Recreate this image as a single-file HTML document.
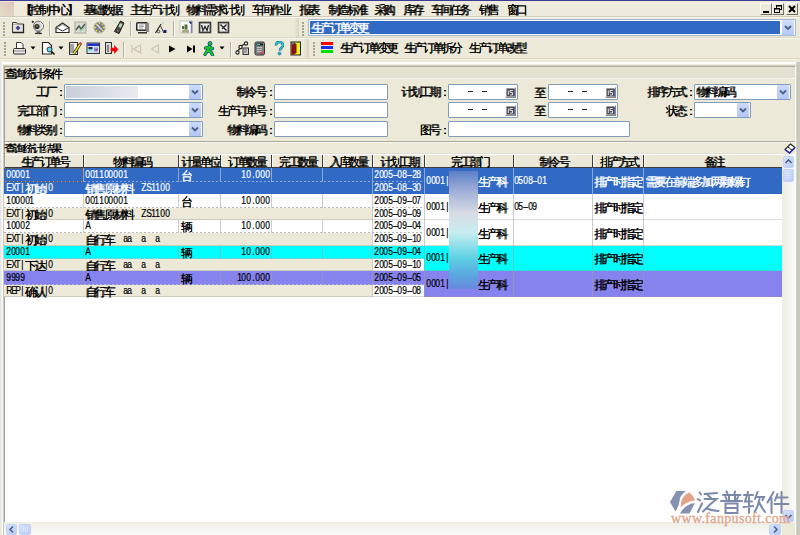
<!DOCTYPE html>
<html><head><meta charset="utf-8"><style>
html,body{margin:0;padding:0;}
body{width:800px;height:535px;overflow:hidden;position:relative;background:#ECE9D8;font-family:"Liberation Sans",sans-serif;}
body>div{position:absolute;}
.t{white-space:nowrap;height:14px;line-height:14px;}
.t span{display:inline-block;height:14px;overflow:visible;vertical-align:top;}
.t b.c{display:inline-block;width:9.4px;height:14px;vertical-align:top;text-align:center;font-weight:normal;font-size:12px;position:relative;top:0px;text-shadow:.5px 0 0 currentColor;}
.t i.g{display:inline-block;width:4.7px;height:14px;vertical-align:top;text-align:center;font-style:normal;font-size:10px;position:relative;top:-1px;transform:scaleX(.85);-webkit-text-stroke:.2px currentColor;}
</style></head><body>
<div style="left:0px;top:0px;width:800px;height:1px;background:#3A3C98"></div>
<div style="left:0px;top:1px;width:800px;height:16px;background:#EEEBDC"></div>
<div style="left:0px;top:16px;width:800px;height:1px;background:#CFCBB8"></div>
<div style="left:0px;top:2px;width:14px;height:14px;background:linear-gradient(45deg,#E6DCC8,#DCC6BA)"></div>
<div class="t " style="left:20.0px;top:2.5px;color:#000"><b class="c">【</b><b class="c">控</b><b class="c">制</b><b class="c">中</b><b class="c">心</b><b class="c">】</b></div>
<div class="t " style="left:83.0px;top:2.5px;color:#000"><b class="c">基</b><b class="c">础</b><b class="c">数</b><b class="c">据</b></div>
<div class="t " style="left:130.0px;top:2.5px;color:#000"><b class="c">主</b><b class="c">生</b><b class="c">产</b><b class="c">计</b><b class="c">划</b></div>
<div class="t " style="left:186.0px;top:2.5px;color:#000"><b class="c">物</b><b class="c">料</b><b class="c">需</b><b class="c">求</b><b class="c">计</b><b class="c">划</b></div>
<div class="t " style="left:251.5px;top:2.5px;color:#000"><b class="c">车</b><b class="c">间</b><b class="c">作</b><b class="c">业</b></div>
<div class="t " style="left:299.0px;top:2.5px;color:#000"><b class="c">报</b><b class="c">表</b></div>
<div class="t " style="left:328.0px;top:2.5px;color:#000"><b class="c">制</b><b class="c">造</b><b class="c">标</b><b class="c">准</b></div>
<div class="t " style="left:374.0px;top:2.5px;color:#000"><b class="c">采</b><b class="c">购</b></div>
<div class="t " style="left:403.0px;top:2.5px;color:#000"><b class="c">库</b><b class="c">存</b></div>
<div class="t " style="left:431.0px;top:2.5px;color:#000"><b class="c">车</b><b class="c">间</b><b class="c">任</b><b class="c">务</b></div>
<div class="t " style="left:478.5px;top:2.5px;color:#000"><b class="c">销</b><b class="c">售</b></div>
<div class="t " style="left:506.5px;top:2.5px;color:#000"><b class="c">窗</b><b class="c">口</b></div>
<div style="left:760px;top:3px;width:12px;height:12px;background:#ECE9D8;border-top:1px solid #fff;border-left:1px solid #fff;border-right:1px solid #716F64;border-bottom:1px solid #716F64;box-sizing:border-box"></div>
<svg style="position:absolute;left:760px;top:3px" width="12" height="12" viewBox="0 0 12 12"><rect x="3" y="8" width="6" height="2" fill="#000"/></svg>
<div style="left:772px;top:3px;width:12px;height:12px;background:#ECE9D8;border-top:1px solid #fff;border-left:1px solid #fff;border-right:1px solid #716F64;border-bottom:1px solid #716F64;box-sizing:border-box"></div>
<svg style="position:absolute;left:772px;top:3px" width="12" height="12" viewBox="0 0 12 12"><rect x="4.5" y="2.5" width="5" height="4" fill="none" stroke="#000"/><rect x="4" y="2" width="6" height="1.5" fill="#000"/><rect x="2.5" y="5.5" width="5" height="4" fill="#ECE9D8" stroke="#000"/><rect x="2" y="5" width="6" height="1.5" fill="#000"/></svg>
<div style="left:786px;top:3px;width:12px;height:12px;background:#ECE9D8;border-top:1px solid #fff;border-left:1px solid #fff;border-right:1px solid #716F64;border-bottom:1px solid #716F64;box-sizing:border-box"></div>
<svg style="position:absolute;left:786px;top:3px" width="12" height="12" viewBox="0 0 12 12"><path d="M3 3L9 9M9 3L3 9" stroke="#000" stroke-width="2"/></svg>
<div style="left:0px;top:17px;width:800px;height:42px;background:#ECE9D8"></div>
<div style="left:0px;top:17px;width:800px;height:1px;background:#F8F7F0"></div>
<div style="left:0px;top:37px;width:800px;height:1px;background:#D9D5C3"></div>
<div style="left:0px;top:38px;width:800px;height:1px;background:#F8F7F0"></div>
<div style="left:0px;top:58px;width:800px;height:1px;background:#D9D5C3"></div>
<div style="left:294px;top:18px;width:5px;height:19px;background:linear-gradient(90deg,#ECE9D8,#D8D4C2)"></div>
<div style="left:304px;top:39px;width:5px;height:19px;background:linear-gradient(90deg,#ECE9D8,#D8D4C2)"></div>
<div style="left:3px;top:22px;width:2px;height:2px;background:#A8A495"></div>
<div style="left:3px;top:25px;width:2px;height:2px;background:#A8A495"></div>
<div style="left:3px;top:28px;width:2px;height:2px;background:#A8A495"></div>
<div style="left:3px;top:31px;width:2px;height:2px;background:#A8A495"></div>
<div style="left:3px;top:34px;width:2px;height:2px;background:#A8A495"></div>
<div style="left:302px;top:22px;width:2px;height:2px;background:#A8A495"></div>
<div style="left:302px;top:25px;width:2px;height:2px;background:#A8A495"></div>
<div style="left:302px;top:28px;width:2px;height:2px;background:#A8A495"></div>
<div style="left:302px;top:31px;width:2px;height:2px;background:#A8A495"></div>
<div style="left:302px;top:34px;width:2px;height:2px;background:#A8A495"></div>
<div style="left:4px;top:42px;width:2px;height:2px;background:#A8A495"></div>
<div style="left:4px;top:45px;width:2px;height:2px;background:#A8A495"></div>
<div style="left:4px;top:48px;width:2px;height:2px;background:#A8A495"></div>
<div style="left:4px;top:51px;width:2px;height:2px;background:#A8A495"></div>
<div style="left:4px;top:54px;width:2px;height:2px;background:#A8A495"></div>
<div style="left:313px;top:42px;width:2px;height:2px;background:#A8A495"></div>
<div style="left:313px;top:45px;width:2px;height:2px;background:#A8A495"></div>
<div style="left:313px;top:48px;width:2px;height:2px;background:#A8A495"></div>
<div style="left:313px;top:51px;width:2px;height:2px;background:#A8A495"></div>
<div style="left:313px;top:54px;width:2px;height:2px;background:#A8A495"></div>
<div style="left:49px;top:21px;width:1px;height:15px;background:#B4B0A0"></div>
<div style="left:50px;top:21px;width:1px;height:15px;background:#F8F8F4"></div>
<div style="left:130px;top:21px;width:1px;height:15px;background:#B4B0A0"></div>
<div style="left:131px;top:21px;width:1px;height:15px;background:#F8F8F4"></div>
<div style="left:173px;top:21px;width:1px;height:15px;background:#B4B0A0"></div>
<div style="left:174px;top:21px;width:1px;height:15px;background:#F8F8F4"></div>
<div style="left:123px;top:42px;width:1px;height:15px;background:#B4B0A0"></div>
<div style="left:124px;top:42px;width:1px;height:15px;background:#F8F8F4"></div>
<div style="left:230px;top:42px;width:1px;height:15px;background:#B4B0A0"></div>
<div style="left:231px;top:42px;width:1px;height:15px;background:#F8F8F4"></div>
<div style="left:308px;top:19px;width:488px;height:17px;background:#fff;border:1px solid #A5B8D8;box-sizing:border-box"></div>
<div style="left:310px;top:21px;width:470px;height:13px;background:#316AC5"></div>
<div class="t " style="left:311.0px;top:20.5px;color:#fff"><b class="c">生</b><b class="c">产</b><b class="c">订</b><b class="c">单</b><b class="c">变</b><b class="c">更</b></div>
<div style="left:782px;top:20px;width:12px;height:15px;background:linear-gradient(180deg,#D2DEFC,#B4C8F6);border-radius:1px"></div>
<svg style="position:absolute;left:782px;top:20px" width="12" height="15" viewBox="0 0 12 15"><path d="M3 6L6 9L9 6" fill="none" stroke="#4D6185" stroke-width="1.8"/></svg>
<div style="left:321px;top:42px;width:12px;height:3px;background:#F00"></div>
<div style="left:321px;top:46px;width:12px;height:3px;background:#2030F0"></div>
<div style="left:321px;top:50px;width:12px;height:3px;background:#00E000"></div>
<div class="t " style="left:340.0px;top:41.0px;color:#000"><b class="c">生</b><b class="c">产</b><b class="c">订</b><b class="c">单</b><b class="c">变</b><b class="c">更</b></div>
<div class="t " style="left:404.0px;top:41.0px;color:#000"><b class="c">生</b><b class="c">产</b><b class="c">订</b><b class="c">单</b><b class="c">拆</b><b class="c">分</b></div>
<div class="t " style="left:468.5px;top:41.0px;color:#000"><b class="c">生</b><b class="c">产</b><b class="c">订</b><b class="c">单</b><b class="c">改</b><b class="c">型</b></div>
<svg style="position:absolute;left:11px;top:21px" width="14" height="14" viewBox="0 0 14 14"><path d="M1.5 1.5h4l1 1.5h6v8.5h-11z" fill="#E6E4DC" stroke="#3C3C3C"/><path d="M1.5 11.5h11V3" fill="none" stroke="#222" stroke-width="1.3"/><path d="M2 3.5h4" stroke="#B8B6A8"/><path d="M7 4.5L9.5 7L7 9.5L4.5 7z" fill="#3E4490"/></svg>
<svg style="position:absolute;left:31px;top:20px" width="14" height="15" viewBox="0 0 14 15"><circle cx="1.8" cy="1.8" r="1.1" fill="#222"/><circle cx="7.5" cy="6.2" r="5" fill="#D8D8D8" stroke="#666"/><path d="M9 2.5A4 4 0 0 1 11 8" stroke="#fff" fill="none"/><circle cx="6" cy="6.5" r="2.6" fill="#303030"/><path d="M5.2 6.8l.9-2 .9 2z" fill="#C8C020"/><path d="M5.5 11.2h4v1.8h-4z" fill="#666"/><path d="M4 13.5h7" stroke="#333" stroke-width="1.2"/></svg>
<svg style="position:absolute;left:55px;top:21.5px" width="15" height="12" viewBox="0 0 15 12"><path d="M1 5.5L7.5 1L14 5.5V10.5H1z" fill="#fff" stroke="#2A2A2A" stroke-width="1.2"/><path d="M1 5.5L7.5 9L14 5.5" fill="none" stroke="#2A2A2A"/><path d="M3 5l4.5-2.5L12 5" fill="none" stroke="#888"/></svg>
<svg style="position:absolute;left:74px;top:21px" width="13" height="13" viewBox="0 0 13 13"><rect x="1" y="1" width="11" height="11" fill="#D8DCD0" stroke="#A8AAA0"/><path d="M2 9L5 5L7 8L11 3" fill="none" stroke="#505A50" stroke-width="1.5"/><path d="M6 10L11 6" stroke="#88C8A0" stroke-width="1.5"/></svg>
<svg style="position:absolute;left:93px;top:21px" width="13" height="13" viewBox="0 0 13 13"><circle cx="6.5" cy="6.5" r="5.8" fill="#7A7E8C" stroke="#C8C8D0"/><path d="M6.5 1v2M6.5 10v2M1 6.5h2M10 6.5h2M2.8 2.8l1.3 1.3M9 9l1.3 1.3M10.2 2.8L9 4.1M2.8 10.2L4.1 9" stroke="#E8E030" stroke-width="1.3"/><path d="M4 3.5L7 7L9 8.5" stroke="#E0E0E0" stroke-width="1.2" fill="none"/></svg>
<svg style="position:absolute;left:112px;top:20px" width="13" height="15" viewBox="0 0 13 15"><path d="M8.5 1L12 3L7 13.5L2.5 11.5z" fill="#4A4C44" stroke="#1A1A1A"/><path d="M8 3L10.5 4.3L8.8 8L6.3 6.8z" fill="#B8D8B8"/><path d="M5 10.5l1.5.8" stroke="#999"/><path d="M1.5 1.5a2 2 0 0 1 3 3z" fill="#C8E8D0"/></svg>
<svg style="position:absolute;left:135px;top:21px" width="15" height="13" viewBox="0 0 15 13"><rect x="1" y="1" width="12" height="9" rx="1.5" fill="#2C2C2C"/><rect x="2.5" y="2.5" width="8" height="6" fill="#F4F4F0"/><path d="M4 4h5M4 5.5h5M4 7h4" stroke="#AAA"/><rect x="11" y="2" width="3" height="9" fill="#888"/><path d="M3 11h9v1.5H3z" fill="#333"/></svg>
<svg style="position:absolute;left:154px;top:21px" width="13" height="13" viewBox="0 0 13 13"><path d="M1.5 12L7 3" stroke="#222" stroke-width="1.2"/><path d="M6.5 5L10 12" stroke="#333" stroke-width="1"/><circle cx="9" cy="2" r="1.2" fill="#B8E0C0"/><rect x="9.5" y="9" width="3" height="3" fill="#1A2A70"/><circle cx="4.5" cy="10.5" r="1.3" fill="none" stroke="#444"/></svg>
<svg style="position:absolute;left:179px;top:20px" width="14" height="14" viewBox="0 0 14 14"><rect x="1" y="1" width="11" height="12" fill="#FAFAF6" stroke="#C8C8C0"/><rect x="12" y="1" width="1.5" height="12" fill="#8080B8"/><path d="M3 6h2v3H3zM5.5 4.5h3v5h-3z" fill="#5A6A40"/><path d="M3 10.5h7M3 12h7" stroke="#A8A880" stroke-width="1.3"/><path d="M10 2l2 0 0 2" stroke="#2040A0"/></svg>
<svg style="position:absolute;left:198px;top:21px" width="14" height="13" viewBox="0 0 14 13"><rect x="1.5" y="1.5" width="11" height="10" fill="#D0D0CC" stroke="#3A3A3A" stroke-width="1.6"/><rect x="3" y="3" width="8" height="7" fill="#F0F0EC"/><path d="M3.5 4L5 9.5L7 5.5L9 9.5L10.5 4" fill="none" stroke="#222" stroke-width="1.3"/></svg>
<svg style="position:absolute;left:217px;top:21px" width="13" height="13" viewBox="0 0 13 13"><rect x="1.5" y="1.5" width="10" height="10" fill="#D0D0CC" stroke="#3A3A3A" stroke-width="1.6"/><rect x="3" y="3" width="7" height="7" fill="#EEE"/><path d="M3.5 3.5L9.5 9.5M9.5 3.5L5 8" stroke="#222" stroke-width="1.4"/></svg>
<svg style="position:absolute;left:12px;top:41px" width="16" height="15" viewBox="0 0 16 15"><path d="M4.5 1.5h4.5l2 2v4h-6.5z" fill="#fff" stroke="#333"/><rect x="1.5" y="7.5" width="12" height="5.5" rx="1" fill="#E8E8E8" stroke="#2A2A2A"/><path d="M2 10h11" stroke="#888"/><rect x="11" y="8.5" width="1.5" height="1" fill="#F08080"/></svg>
<svg style="position:absolute;left:30px;top:46px" width="6" height="4" viewBox="0 0 6 4"><path d="M0.5 0.5h5L3 3.5z" fill="#000"/></svg>
<svg style="position:absolute;left:41px;top:41px" width="15" height="15" viewBox="0 0 15 15"><path d="M1.5 1.5h6l3 3v8.5h-9z" fill="#fff" stroke="#222" stroke-width="1.1"/><circle cx="8.5" cy="8.5" r="2.5" fill="#60D8E8" stroke="#333"/><path d="M10.5 10.5l3 3" stroke="#111" stroke-width="1.6"/></svg>
<svg style="position:absolute;left:58px;top:46px" width="6" height="4" viewBox="0 0 6 4"><path d="M0.5 0.5h5L3 3.5z" fill="#000"/></svg>
<svg style="position:absolute;left:68px;top:41px" width="14" height="15" viewBox="0 0 14 15"><rect x="1.5" y="1.5" width="8" height="12" fill="#F0F0F0" stroke="#333"/><path d="M3 3v9M5 3v9" stroke="#555"/><path d="M12.5 2.5L6 12.5" stroke="#222" stroke-width="3"/><path d="M12.5 2.5L6 12.5" stroke="#F0E020" stroke-width="1.5"/><circle cx="12.5" cy="2.5" r="1.2" fill="#E03030"/></svg>
<svg style="position:absolute;left:86px;top:42px" width="15" height="13" viewBox="0 0 15 13"><rect x="1" y="1" width="12.5" height="10.5" fill="#D8E0F0" stroke="#333"/><rect x="1.5" y="1.5" width="11.5" height="2.5" fill="#2030C8"/><rect x="2.5" y="5" width="4" height="2" fill="#2A2A2A"/><rect x="2.5" y="7" width="4" height="1.5" fill="#40D0D0"/><rect x="8" y="5.5" width="4" height="4" fill="#8090E8"/><rect x="9.5" y="7" width="1.5" height="1.5" fill="#E03030"/></svg>
<svg style="position:absolute;left:104px;top:41px" width="15" height="15" viewBox="0 0 15 15"><rect x="1.5" y="1.5" width="6" height="11" fill="#D8D8D8" stroke="#333"/><rect x="3" y="4" width="2" height="7" fill="#888"/><path d="M7 7h3.5V4.5L14 8.5l-3.5 4V10H7z" fill="#F00" stroke="#C00" stroke-width=".5"/></svg>
<svg style="position:absolute;left:131px;top:44px" width="11" height="10" viewBox="0 0 11 10"><path d="M1 1v8M9.5 1L2.5 5L9.5 9z" fill="none" stroke="#C9C6B8" stroke-width="1.2"/></svg>
<svg style="position:absolute;left:150px;top:44px" width="10" height="10" viewBox="0 0 10 10"><path d="M8.5 1L1.5 5L8.5 9z" fill="none" stroke="#C9C6B8" stroke-width="1.2"/></svg>
<svg style="position:absolute;left:168px;top:45px" width="9" height="8" viewBox="0 0 9 8"><path d="M1 0.5L7.5 4L1 7.5z" fill="#000"/></svg>
<svg style="position:absolute;left:186px;top:45px" width="10" height="8" viewBox="0 0 10 8"><path d="M1 0.5L6.5 4L1 7.5z" fill="#000"/><rect x="7" y="0.5" width="2" height="7" fill="#000"/></svg>
<svg style="position:absolute;left:203px;top:41px" width="13" height="15" viewBox="0 0 13 15"><g fill="none" stroke-linecap="round" stroke-linejoin="round"><path d="M6.5 5L4.5 9.5L2 13.5M4.5 9.5L8 11L9.5 14M6 6L9.5 7.5M6 6L2.5 7" stroke="#1030A0" stroke-width="3.2"/><path d="M6.5 5L4.5 9.5L2 13.5M4.5 9.5L8 11L9.5 14M6 6L9.5 7.5M6 6L2.5 7" stroke="#10D010" stroke-width="2"/></g><circle cx="7" cy="2.5" r="2" fill="#10D010" stroke="#1030A0" stroke-width=".8"/></svg>
<svg style="position:absolute;left:219px;top:46px" width="6" height="4" viewBox="0 0 6 4"><path d="M0.5 0.5h5L3 3.5z" fill="#000"/></svg>
<svg style="position:absolute;left:235px;top:41px" width="15" height="15" viewBox="0 0 15 15"><circle cx="2.5" cy="11.5" r="1.6" fill="#fff" stroke="#222" stroke-width="1.2"/><circle cx="5.5" cy="6" r="1.6" fill="#fff" stroke="#222" stroke-width="1.2"/><circle cx="11" cy="2.5" r="1.6" fill="#fff" stroke="#222" stroke-width="1.2"/><path d="M2.5 10L5 7.5M6.5 5L9.5 3" stroke="#222" stroke-width="1.2"/><rect x="8" y="7" width="5.5" height="6.5" fill="#D0D0D0" stroke="#333"/><path d="M9 9h3M9 11h3" stroke="#666"/></svg>
<svg style="position:absolute;left:254px;top:41px" width="12" height="15" viewBox="0 0 12 15"><rect x="1" y="1" width="9.5" height="13" rx="1.5" fill="#808080" stroke="#333"/><rect x="2.5" y="2.5" width="6.5" height="2" fill="#0A2A2A"/><rect x="3" y="3" width="3" height="1" fill="#40C0C0"/><path d="M3 6.5h5M3 8.5h5M3 10.5h5" stroke="#C0C0C0"/><rect x="6.5" y="11" width="2.5" height="2" fill="#E04040"/></svg>
<svg style="position:absolute;left:274px;top:41px" width="10" height="15" viewBox="0 0 10 15"><path d="M2 4.5C2 2 3.5 1 5.5 1S9 2.3 9 4.2C9 6.5 6 7 6 9.5" fill="none" stroke="#1A6A80" stroke-width="2.6"/><path d="M2 4.5C2 2 3.5 1 5.5 1S9 2.3 9 4.2C9 6.5 6 7 6 9.5" fill="none" stroke="#20C8D8" stroke-width="1.5"/><circle cx="5.5" cy="12.5" r="1.5" fill="#20B0C8" stroke="#1A6A80" stroke-width=".6"/></svg>
<svg style="position:absolute;left:290px;top:41px" width="12" height="15" viewBox="0 0 12 15"><rect x="1" y="1" width="9.5" height="13" fill="#F0F020" stroke="#222"/><path d="M1.5 1.5h3l2 2v8l-2 2h-3z" fill="#8A1010"/><circle cx="3" cy="2.5" r="1" fill="#30A0D0"/></svg>
<div style="left:0px;top:59px;width:800px;height:476px;background:#ECE9D8"></div>
<div style="left:0px;top:62px;width:800px;height:2px;background:#FDFDFA"></div>
<div style="left:0px;top:64px;width:800px;height:1px;background:#EEEBDF"></div>
<div style="left:0px;top:65px;width:800px;height:1px;background:#D6D3C4"></div>
<div style="left:0px;top:62px;width:1px;height:473px;background:#E2E4E8"></div>
<div style="left:1px;top:62px;width:1px;height:473px;background:#F0F0EC"></div>
<div style="left:2px;top:62px;width:1px;height:473px;background:#FAFAF5"></div>
<div style="left:3px;top:66px;width:1px;height:469px;background:#CDCBC0"></div>
<div style="left:4px;top:66px;width:1px;height:469px;background:#A8A596"></div>
<div style="left:795px;top:66px;width:1px;height:469px;background:#FBFBF8"></div>
<div style="left:796px;top:62px;width:1px;height:473px;background:#D6D3CD"></div>
<div style="left:797px;top:62px;width:1px;height:473px;background:#BFC4C8"></div>
<div style="left:798px;top:62px;width:2px;height:473px;background:#CBCAB8"></div>
<div style="left:0px;top:59px;width:800px;height:1px;background:#F4F2E8"></div>
<div style="left:4px;top:66px;width:791px;height:1px;background:#ACA899"></div>
<div style="left:5px;top:67px;width:790px;height:11px;background:#E4E1D0"></div>
<div style="left:5px;top:78px;width:790px;height:1px;background:#F6F5EE"></div>
<div class="t " style="left:4.0px;top:66.5px;color:#000"><b class="c">查</b><b class="c">询</b><b class="c">统</b><b class="c">计</b><b class="c">条</b><b class="c">件</b></div>
<div style="left:4px;top:141px;width:791px;height:1px;background:#ACA899"></div>
<div style="left:5px;top:142px;width:790px;height:1px;background:#F8F7F2"></div>
<div class="t " style="left:4.0px;top:141.5px;color:#000"><b class="c">查</b><b class="c">询</b><b class="c">统</b><b class="c">计</b><b class="c">结</b><b class="c">果</b></div>
<div style="left:64px;top:84px;width:139px;height:16px;background:#fff;border:1px solid #7F9DB9;box-sizing:border-box;border-radius:1px"></div>
<div style="left:189px;top:85px;width:12px;height:14px;background:linear-gradient(180deg,#CCDAFC,#B2C6F6);border-radius:1px"></div>
<svg style="position:absolute;left:189px;top:85px" width="12" height="14" viewBox="0 0 12 14"><path d="M3 5.5L6 8.5L9 5.5" fill="none" stroke="#4D6185" stroke-width="1.8"/></svg>
<div style="left:64px;top:102px;width:139px;height:16px;background:#fff;border:1px solid #7F9DB9;box-sizing:border-box;border-radius:1px"></div>
<div style="left:189px;top:103px;width:12px;height:14px;background:linear-gradient(180deg,#CCDAFC,#B2C6F6);border-radius:1px"></div>
<svg style="position:absolute;left:189px;top:103px" width="12" height="14" viewBox="0 0 12 14"><path d="M3 5.5L6 8.5L9 5.5" fill="none" stroke="#4D6185" stroke-width="1.8"/></svg>
<div style="left:64px;top:121px;width:139px;height:16px;background:#fff;border:1px solid #7F9DB9;box-sizing:border-box;border-radius:1px"></div>
<div style="left:189px;top:122px;width:12px;height:14px;background:linear-gradient(180deg,#CCDAFC,#B2C6F6);border-radius:1px"></div>
<svg style="position:absolute;left:189px;top:122px" width="12" height="14" viewBox="0 0 12 14"><path d="M3 5.5L6 8.5L9 5.5" fill="none" stroke="#4D6185" stroke-width="1.8"/></svg>
<div style="left:66px;top:86px;width:72px;height:12px;background:linear-gradient(90deg,#C9CFDA,#DCE0E8 60%,#E8EBF0)"></div>
<div style="left:274px;top:84px;width:114px;height:16px;background:#fff;border:1px solid #7F9DB9;box-sizing:border-box;border-radius:1px"></div>
<div style="left:274px;top:102px;width:114px;height:16px;background:#fff;border:1px solid #7F9DB9;box-sizing:border-box;border-radius:1px"></div>
<div style="left:274px;top:121px;width:114px;height:16px;background:#fff;border:1px solid #7F9DB9;box-sizing:border-box;border-radius:1px"></div>
<div style="left:448px;top:84px;width:70px;height:16px;background:#fff;border:1px solid #7F9DB9;box-sizing:border-box;border-radius:1px"></div>
<div style="left:505px;top:87px;width:11px;height:11px;background:#E8E6DC;border-top:1px solid #fff;border-left:1px solid #fff;border-right:1px solid #888;border-bottom:1px solid #888;box-sizing:border-box"></div>
<svg style="position:absolute;left:505px;top:87px" width="11" height="11" viewBox="0 0 11 11"><rect x="1.5" y="1.5" width="8" height="8" fill="#4A4A58"/><path d="M3.3 3.5v4.5M5 3.5h2.8M5 3.5v2h2.5v2.5H5" stroke="#F0F0F0" fill="none" stroke-width=".9"/><path d="M9.5 2v7.5" stroke="#5A5AC0"/></svg>
<div style="left:468px;top:91px;width:5px;height:1px;background:#222"></div>
<div style="left:482px;top:91px;width:5px;height:1px;background:#222"></div>
<div style="left:548px;top:84px;width:70px;height:16px;background:#fff;border:1px solid #7F9DB9;box-sizing:border-box;border-radius:1px"></div>
<div style="left:605px;top:87px;width:11px;height:11px;background:#E8E6DC;border-top:1px solid #fff;border-left:1px solid #fff;border-right:1px solid #888;border-bottom:1px solid #888;box-sizing:border-box"></div>
<svg style="position:absolute;left:605px;top:87px" width="11" height="11" viewBox="0 0 11 11"><rect x="1.5" y="1.5" width="8" height="8" fill="#4A4A58"/><path d="M3.3 3.5v4.5M5 3.5h2.8M5 3.5v2h2.5v2.5H5" stroke="#F0F0F0" fill="none" stroke-width=".9"/><path d="M9.5 2v7.5" stroke="#5A5AC0"/></svg>
<div style="left:568px;top:91px;width:5px;height:1px;background:#222"></div>
<div style="left:582px;top:91px;width:5px;height:1px;background:#222"></div>
<div class="t " style="left:534.0px;top:85.5px;color:#000"><b class="c">至</b></div>
<div style="left:448px;top:102px;width:70px;height:16px;background:#fff;border:1px solid #7F9DB9;box-sizing:border-box;border-radius:1px"></div>
<div style="left:505px;top:105px;width:11px;height:11px;background:#E8E6DC;border-top:1px solid #fff;border-left:1px solid #fff;border-right:1px solid #888;border-bottom:1px solid #888;box-sizing:border-box"></div>
<svg style="position:absolute;left:505px;top:105px" width="11" height="11" viewBox="0 0 11 11"><rect x="1.5" y="1.5" width="8" height="8" fill="#4A4A58"/><path d="M3.3 3.5v4.5M5 3.5h2.8M5 3.5v2h2.5v2.5H5" stroke="#F0F0F0" fill="none" stroke-width=".9"/><path d="M9.5 2v7.5" stroke="#5A5AC0"/></svg>
<div style="left:468px;top:109px;width:5px;height:1px;background:#222"></div>
<div style="left:482px;top:109px;width:5px;height:1px;background:#222"></div>
<div style="left:548px;top:102px;width:70px;height:16px;background:#fff;border:1px solid #7F9DB9;box-sizing:border-box;border-radius:1px"></div>
<div style="left:605px;top:105px;width:11px;height:11px;background:#E8E6DC;border-top:1px solid #fff;border-left:1px solid #fff;border-right:1px solid #888;border-bottom:1px solid #888;box-sizing:border-box"></div>
<svg style="position:absolute;left:605px;top:105px" width="11" height="11" viewBox="0 0 11 11"><rect x="1.5" y="1.5" width="8" height="8" fill="#4A4A58"/><path d="M3.3 3.5v4.5M5 3.5h2.8M5 3.5v2h2.5v2.5H5" stroke="#F0F0F0" fill="none" stroke-width=".9"/><path d="M9.5 2v7.5" stroke="#5A5AC0"/></svg>
<div style="left:568px;top:109px;width:5px;height:1px;background:#222"></div>
<div style="left:582px;top:109px;width:5px;height:1px;background:#222"></div>
<div class="t " style="left:534.0px;top:103.5px;color:#000"><b class="c">至</b></div>
<div style="left:448px;top:121px;width:182px;height:16px;background:#fff;border:1px solid #7F9DB9;box-sizing:border-box;border-radius:1px"></div>
<div style="left:694px;top:84px;width:97px;height:16px;background:#fff;border:1px solid #7F9DB9;box-sizing:border-box;border-radius:1px"></div>
<div style="left:777px;top:85px;width:12px;height:14px;background:linear-gradient(180deg,#CCDAFC,#B2C6F6);border-radius:1px"></div>
<svg style="position:absolute;left:777px;top:85px" width="12" height="14" viewBox="0 0 12 14"><path d="M3 5.5L6 8.5L9 5.5" fill="none" stroke="#4D6185" stroke-width="1.8"/></svg>
<div class="t " style="left:696.0px;top:85.0px;color:#000"><b class="c">物</b><b class="c">料</b><b class="c">编</b><b class="c">码</b></div>
<div style="left:694px;top:102px;width:57px;height:16px;background:#fff;border:1px solid #7F9DB9;box-sizing:border-box;border-radius:1px"></div>
<div style="left:737px;top:103px;width:12px;height:14px;background:linear-gradient(180deg,#CCDAFC,#B2C6F6);border-radius:1px"></div>
<svg style="position:absolute;left:737px;top:103px" width="12" height="14" viewBox="0 0 12 14"><path d="M3 5.5L6 8.5L9 5.5" fill="none" stroke="#4D6185" stroke-width="1.8"/></svg>
<div class="t " style="left:35.8px;top:85.0px;color:#000"><b class="c">工</b><b class="c">厂</b><b class="c">：</b></div>
<div class="t " style="left:17.0px;top:104.0px;color:#000"><b class="c">完</b><b class="c">工</b><b class="c">部</b><b class="c">门</b><b class="c">：</b></div>
<div class="t " style="left:17.0px;top:123.0px;color:#000"><b class="c">物</b><b class="c">料</b><b class="c">类</b><b class="c">别</b><b class="c">：</b></div>
<div class="t " style="left:236.4px;top:85.0px;color:#000"><b class="c">制</b><b class="c">令</b><b class="c">号</b><b class="c">：</b></div>
<div class="t " style="left:217.6px;top:104.0px;color:#000"><b class="c">生</b><b class="c">产</b><b class="c">订</b><b class="c">单</b><b class="c">号</b><b class="c">：</b></div>
<div class="t " style="left:227.0px;top:123.0px;color:#000"><b class="c">物</b><b class="c">料</b><b class="c">编</b><b class="c">码</b><b class="c">：</b></div>
<div class="t " style="left:401.0px;top:85.0px;color:#000"><b class="c">计</b><b class="c">划</b><b class="c">工</b><b class="c">期</b><b class="c">：</b></div>
<div class="t " style="left:419.8px;top:123.0px;color:#000"><b class="c">图</b><b class="c">号</b><b class="c">：</b></div>
<div class="t " style="left:647.0px;top:85.0px;color:#000"><b class="c">排</b><b class="c">序</b><b class="c">方</b><b class="c">式</b><b class="c">：</b></div>
<div class="t " style="left:665.8px;top:104.0px;color:#000"><b class="c">状</b><b class="c">态</b><b class="c">：</b></div>
<svg style="position:absolute;left:784px;top:143px" width="12" height="11" viewBox="0 0 12 11"><path d="M6.5 1L11 4.5L5.5 10L1 6.5z" fill="#fff" stroke="#222" stroke-width="1.1"/><path d="M1 6.5L5.5 10L11 4.5" fill="none" stroke="#2A2AB0" stroke-width="1.4"/><path d="M4 4L8.5 7.5" stroke="#222"/></svg>
<div style="left:5px;top:153px;width:777px;height:369px;background:#fff"></div>
<div style="left:5px;top:153px;width:777px;height:1px;background:#DEDDD6"></div>
<div style="left:5px;top:154px;width:777px;height:14px;background:#EBE8D7"></div>
<div style="left:5px;top:154px;width:777px;height:1px;background:#fff"></div>
<div style="left:5px;top:167px;width:777px;height:1px;background:#3C3C3C"></div>
<div style="left:83px;top:155px;width:1px;height:12px;background:#3A3A3A"></div>
<div style="left:84px;top:155px;width:1px;height:12px;background:#fff"></div>
<div style="left:178px;top:155px;width:1px;height:12px;background:#3A3A3A"></div>
<div style="left:179px;top:155px;width:1px;height:12px;background:#fff"></div>
<div style="left:220px;top:155px;width:1px;height:12px;background:#3A3A3A"></div>
<div style="left:221px;top:155px;width:1px;height:12px;background:#fff"></div>
<div style="left:271px;top:155px;width:1px;height:12px;background:#3A3A3A"></div>
<div style="left:272px;top:155px;width:1px;height:12px;background:#fff"></div>
<div style="left:322px;top:155px;width:1px;height:12px;background:#3A3A3A"></div>
<div style="left:323px;top:155px;width:1px;height:12px;background:#fff"></div>
<div style="left:372px;top:155px;width:1px;height:12px;background:#3A3A3A"></div>
<div style="left:373px;top:155px;width:1px;height:12px;background:#fff"></div>
<div style="left:424px;top:155px;width:1px;height:12px;background:#3A3A3A"></div>
<div style="left:425px;top:155px;width:1px;height:12px;background:#fff"></div>
<div style="left:513px;top:155px;width:1px;height:12px;background:#3A3A3A"></div>
<div style="left:514px;top:155px;width:1px;height:12px;background:#fff"></div>
<div style="left:592px;top:155px;width:1px;height:12px;background:#3A3A3A"></div>
<div style="left:593px;top:155px;width:1px;height:12px;background:#fff"></div>
<div style="left:643px;top:155px;width:1px;height:12px;background:#3A3A3A"></div>
<div style="left:644px;top:155px;width:1px;height:12px;background:#fff"></div>
<div class="t " style="left:21.0px;top:155.0px;color:#000"><b class="c">生</b><b class="c">产</b><b class="c">订</b><b class="c">单</b><b class="c">号</b></div>
<div class="t " style="left:112.7px;top:155.0px;color:#000"><b class="c">物</b><b class="c">料</b><b class="c">编</b><b class="c">码</b></div>
<div class="t " style="left:181.2px;top:155.0px;color:#000"><b class="c">计</b><b class="c">量</b><b class="c">单</b><b class="c">位</b></div>
<div class="t " style="left:227.7px;top:155.0px;color:#000"><b class="c">订</b><b class="c">单</b><b class="c">数</b><b class="c">量</b></div>
<div class="t " style="left:278.7px;top:155.0px;color:#000"><b class="c">完</b><b class="c">工</b><b class="c">数</b><b class="c">量</b></div>
<div class="t " style="left:329.2px;top:155.0px;color:#000"><b class="c">入</b><b class="c">库</b><b class="c">数</b><b class="c">量</b></div>
<div class="t " style="left:380.2px;top:155.0px;color:#000"><b class="c">计</b><b class="c">划</b><b class="c">工</b><b class="c">期</b></div>
<div class="t " style="left:450.7px;top:155.0px;color:#000"><b class="c">完</b><b class="c">工</b><b class="c">部</b><b class="c">门</b></div>
<div class="t " style="left:539.4px;top:155.0px;color:#000"><b class="c">制</b><b class="c">令</b><b class="c">号</b></div>
<div class="t " style="left:599.7px;top:155.0px;color:#000"><b class="c">排</b><b class="c">产</b><b class="c">方</b><b class="c">式</b></div>
<div class="t " style="left:704.1px;top:155.0px;color:#000"><b class="c">备</b><b class="c">注</b></div>
<div style="left:4px;top:168px;width:778px;height:26px;background:#316AC5"></div>
<div style="left:4px;top:182px;width:368px;height:12px;background:#316AC5"></div>
<div style="left:372px;top:182px;width:52px;height:12px;background:#316AC5"></div>
<div style="left:83px;top:168px;width:1px;height:14px;background:rgba(200,210,230,.6)"></div>
<div style="left:178px;top:168px;width:1px;height:14px;background:rgba(200,210,230,.6)"></div>
<div style="left:220px;top:168px;width:1px;height:14px;background:rgba(200,210,230,.6)"></div>
<div style="left:271px;top:168px;width:1px;height:14px;background:rgba(200,210,230,.6)"></div>
<div style="left:322px;top:168px;width:1px;height:14px;background:rgba(200,210,230,.6)"></div>
<div style="left:372px;top:168px;width:1px;height:14px;background:rgba(200,210,230,.6)"></div>
<div style="left:372px;top:182px;width:1px;height:12px;background:rgba(200,210,230,.6)"></div>
<div style="left:424px;top:168px;width:1px;height:26px;background:rgba(200,210,230,.6)"></div>
<div style="left:513px;top:168px;width:1px;height:26px;background:rgba(200,210,230,.6)"></div>
<div style="left:592px;top:168px;width:1px;height:26px;background:rgba(200,210,230,.6)"></div>
<div style="left:643px;top:168px;width:1px;height:26px;background:rgba(200,210,230,.6)"></div>
<div style="left:4px;top:181px;width:420px;height:1px;background:repeating-linear-gradient(90deg,#8FAAD8 0 2px,transparent 2px 4px)"></div>
<div style="left:4px;top:193px;width:778px;height:1px;background:rgba(255,255,255,.0)"></div>
<div class="t " style="left:6.0px;top:168.5px;color:#fff"><i class="g">0</i><i class="g">0</i><i class="g">0</i><i class="g">0</i><i class="g">1</i></div>
<div class="t " style="left:85.0px;top:168.5px;color:#fff"><i class="g">0</i><i class="g">0</i><i class="g">1</i><i class="g">1</i><i class="g">0</i><i class="g">0</i><i class="g">0</i><i class="g">0</i><i class="g">1</i></div>
<div class="t " style="left:180.5px;top:168.5px;color:#fff"><b class="c">台</b></div>
<div class="t " style="left:241.3px;top:168.5px;color:#fff"><i class="g">1</i><i class="g">0</i><i class="g">.</i><i class="g">0</i><i class="g">0</i><i class="g">0</i></div>
<div class="t " style="left:374.0px;top:168.5px;color:#fff"><i class="g">2</i><i class="g">0</i><i class="g">0</i><i class="g">5</i><i class="g">&#8211;</i><i class="g">0</i><i class="g">8</i><i class="g">&#8211;</i><i class="g">2</i><i class="g">8</i></div>
<div class="t " style="left:6.0px;top:181.5px;color:#fff"><i class="g">E</i><i class="g">X</i><i class="g">T</i><i class="g">|</i><b class="c">初</b><b class="c">始</b><i class="g">|</i><i class="g">0</i></div>
<div class="t " style="left:85.0px;top:181.5px;color:#fff"><b class="c">销</b><b class="c">售</b><b class="c">原</b><b class="c">材</b><b class="c">料</b><i class="g"></i><i class="g"></i><i class="g">Z</i><i class="g">S</i><i class="g">1</i><i class="g">1</i><i class="g">0</i><i class="g">0</i></div>
<div class="t " style="left:374.0px;top:181.5px;color:#fff"><i class="g">2</i><i class="g">0</i><i class="g">0</i><i class="g">5</i><i class="g">&#8211;</i><i class="g">0</i><i class="g">8</i><i class="g">&#8211;</i><i class="g">3</i><i class="g">0</i></div>
<div class="t " style="left:426.0px;top:174.5px;color:#fff"><i class="g">0</i><i class="g">0</i><i class="g">0</i><i class="g">1</i><i class="g">|</i></div>
<div class="t " style="left:477.5px;top:174.5px;color:#fff"><b class="c">生</b><b class="c">产</b><b class="c">科</b></div>
<div class="t " style="left:513.5px;top:174.5px;color:#fff"><i class="g">0</i><i class="g">5</i><i class="g">0</i><i class="g">8</i><i class="g">&#8211;</i><i class="g">0</i><i class="g">1</i></div>
<div class="t " style="left:594.0px;top:174.5px;color:#fff"><b class="c">排</b><b class="c">产</b><b class="c">时</b><b class="c">指</b><b class="c">定</b></div>
<div class="t " style="left:645.0px;top:174.5px;color:#fff"><b class="c">需</b><b class="c">要</b><b class="c">在</b><b class="c">前</b><b class="c">端</b><b class="c">多</b><b class="c">加</b><b class="c">两</b><b class="c">颗</b><b class="c">螺</b><b class="c">钉</b></div>
<div style="left:4px;top:194px;width:778px;height:26px;background:#FFFFFF"></div>
<div style="left:4px;top:208px;width:368px;height:12px;background:#ECE9D8"></div>
<div style="left:372px;top:208px;width:52px;height:12px;background:#FFFFFF"></div>
<div style="left:83px;top:194px;width:1px;height:14px;background:rgba(160,160,160,.55)"></div>
<div style="left:178px;top:194px;width:1px;height:14px;background:rgba(160,160,160,.55)"></div>
<div style="left:220px;top:194px;width:1px;height:14px;background:rgba(160,160,160,.55)"></div>
<div style="left:271px;top:194px;width:1px;height:14px;background:rgba(160,160,160,.55)"></div>
<div style="left:322px;top:194px;width:1px;height:14px;background:rgba(160,160,160,.55)"></div>
<div style="left:372px;top:194px;width:1px;height:14px;background:rgba(160,160,160,.55)"></div>
<div style="left:372px;top:208px;width:1px;height:12px;background:rgba(160,160,160,.55)"></div>
<div style="left:424px;top:194px;width:1px;height:26px;background:rgba(160,160,160,.55)"></div>
<div style="left:513px;top:194px;width:1px;height:26px;background:rgba(160,160,160,.55)"></div>
<div style="left:592px;top:194px;width:1px;height:26px;background:rgba(160,160,160,.55)"></div>
<div style="left:643px;top:194px;width:1px;height:26px;background:rgba(160,160,160,.55)"></div>
<div style="left:4px;top:207px;width:420px;height:1px;background:repeating-linear-gradient(90deg,#B8B8B8 0 2px,transparent 2px 4px)"></div>
<div style="left:4px;top:219px;width:778px;height:1px;background:rgba(150,150,150,.35)"></div>
<div class="t " style="left:6.0px;top:194.5px;color:#000"><i class="g">1</i><i class="g">0</i><i class="g">0</i><i class="g">0</i><i class="g">0</i><i class="g">1</i></div>
<div class="t " style="left:85.0px;top:194.5px;color:#000"><i class="g">0</i><i class="g">0</i><i class="g">1</i><i class="g">1</i><i class="g">0</i><i class="g">0</i><i class="g">0</i><i class="g">0</i><i class="g">1</i></div>
<div class="t " style="left:180.5px;top:194.5px;color:#000"><b class="c">台</b></div>
<div class="t " style="left:241.3px;top:194.5px;color:#000"><i class="g">1</i><i class="g">0</i><i class="g">.</i><i class="g">0</i><i class="g">0</i><i class="g">0</i></div>
<div class="t " style="left:374.0px;top:194.5px;color:#000"><i class="g">2</i><i class="g">0</i><i class="g">0</i><i class="g">5</i><i class="g">&#8211;</i><i class="g">0</i><i class="g">9</i><i class="g">&#8211;</i><i class="g">0</i><i class="g">7</i></div>
<div class="t " style="left:6.0px;top:207.5px;color:#000"><i class="g">E</i><i class="g">X</i><i class="g">T</i><i class="g">|</i><b class="c">初</b><b class="c">始</b><i class="g">|</i><i class="g">0</i></div>
<div class="t " style="left:85.0px;top:207.5px;color:#000"><b class="c">销</b><b class="c">售</b><b class="c">原</b><b class="c">材</b><b class="c">料</b><i class="g"></i><i class="g"></i><i class="g">Z</i><i class="g">S</i><i class="g">1</i><i class="g">1</i><i class="g">0</i><i class="g">0</i></div>
<div class="t " style="left:374.0px;top:207.5px;color:#000"><i class="g">2</i><i class="g">0</i><i class="g">0</i><i class="g">5</i><i class="g">&#8211;</i><i class="g">0</i><i class="g">9</i><i class="g">&#8211;</i><i class="g">0</i><i class="g">9</i></div>
<div class="t " style="left:426.0px;top:200.5px;color:#000"><i class="g">0</i><i class="g">0</i><i class="g">0</i><i class="g">1</i><i class="g">|</i></div>
<div class="t " style="left:477.5px;top:200.5px;color:#000"><b class="c">生</b><b class="c">产</b><b class="c">科</b></div>
<div class="t " style="left:513.5px;top:200.5px;color:#000"><i class="g">0</i><i class="g">5</i><i class="g">&#8211;</i><i class="g">0</i><i class="g">9</i></div>
<div class="t " style="left:594.0px;top:200.5px;color:#000"><b class="c">排</b><b class="c">产</b><b class="c">时</b><b class="c">指</b><b class="c">定</b></div>
<div style="left:4px;top:220px;width:778px;height:26px;background:#FFFFFF"></div>
<div style="left:4px;top:233px;width:368px;height:13px;background:#ECE9D8"></div>
<div style="left:372px;top:233px;width:52px;height:13px;background:#FFFFFF"></div>
<div style="left:83px;top:220px;width:1px;height:13px;background:rgba(160,160,160,.55)"></div>
<div style="left:178px;top:220px;width:1px;height:13px;background:rgba(160,160,160,.55)"></div>
<div style="left:220px;top:220px;width:1px;height:13px;background:rgba(160,160,160,.55)"></div>
<div style="left:271px;top:220px;width:1px;height:13px;background:rgba(160,160,160,.55)"></div>
<div style="left:322px;top:220px;width:1px;height:13px;background:rgba(160,160,160,.55)"></div>
<div style="left:372px;top:220px;width:1px;height:13px;background:rgba(160,160,160,.55)"></div>
<div style="left:372px;top:233px;width:1px;height:13px;background:rgba(160,160,160,.55)"></div>
<div style="left:424px;top:220px;width:1px;height:26px;background:rgba(160,160,160,.55)"></div>
<div style="left:513px;top:220px;width:1px;height:26px;background:rgba(160,160,160,.55)"></div>
<div style="left:592px;top:220px;width:1px;height:26px;background:rgba(160,160,160,.55)"></div>
<div style="left:643px;top:220px;width:1px;height:26px;background:rgba(160,160,160,.55)"></div>
<div style="left:4px;top:232px;width:420px;height:1px;background:repeating-linear-gradient(90deg,#B8B8B8 0 2px,transparent 2px 4px)"></div>
<div style="left:4px;top:245px;width:778px;height:1px;background:rgba(150,150,150,.35)"></div>
<div class="t " style="left:6.0px;top:220.0px;color:#000"><i class="g">1</i><i class="g">0</i><i class="g">0</i><i class="g">0</i><i class="g">2</i></div>
<div class="t " style="left:85.0px;top:220.0px;color:#000"><i class="g">A</i></div>
<div class="t " style="left:180.5px;top:220.0px;color:#000"><b class="c">辆</b></div>
<div class="t " style="left:241.3px;top:220.0px;color:#000"><i class="g">1</i><i class="g">0</i><i class="g">.</i><i class="g">0</i><i class="g">0</i><i class="g">0</i></div>
<div class="t " style="left:374.0px;top:220.0px;color:#000"><i class="g">2</i><i class="g">0</i><i class="g">0</i><i class="g">5</i><i class="g">&#8211;</i><i class="g">0</i><i class="g">9</i><i class="g">&#8211;</i><i class="g">0</i><i class="g">4</i></div>
<div class="t " style="left:6.0px;top:233.0px;color:#000"><i class="g">E</i><i class="g">X</i><i class="g">T</i><i class="g">|</i><b class="c">初</b><b class="c">始</b><i class="g">|</i><i class="g">0</i></div>
<div class="t " style="left:85.0px;top:233.0px;color:#000"><b class="c">自</b><b class="c">行</b><b class="c">车</b><i class="g"></i><i class="g"></i><i class="g">a</i><i class="g">a</i><i class="g"></i><i class="g"></i><i class="g">a</i><i class="g"></i><i class="g"></i><i class="g">a</i></div>
<div class="t " style="left:374.0px;top:233.0px;color:#000"><i class="g">2</i><i class="g">0</i><i class="g">0</i><i class="g">5</i><i class="g">&#8211;</i><i class="g">0</i><i class="g">9</i><i class="g">&#8211;</i><i class="g">1</i><i class="g">0</i></div>
<div class="t " style="left:426.0px;top:226.5px;color:#000"><i class="g">0</i><i class="g">0</i><i class="g">0</i><i class="g">1</i><i class="g">|</i></div>
<div class="t " style="left:477.5px;top:226.5px;color:#000"><b class="c">生</b><b class="c">产</b><b class="c">科</b></div>
<div class="t " style="left:594.0px;top:226.5px;color:#000"><b class="c">排</b><b class="c">产</b><b class="c">时</b><b class="c">指</b><b class="c">定</b></div>
<div style="left:4px;top:246px;width:778px;height:25px;background:#00FFFF"></div>
<div style="left:4px;top:259px;width:368px;height:12px;background:#ECE9D8"></div>
<div style="left:372px;top:259px;width:52px;height:12px;background:#FFFFFF"></div>
<div style="left:83px;top:246px;width:1px;height:13px;background:rgba(160,160,160,.55)"></div>
<div style="left:178px;top:246px;width:1px;height:13px;background:rgba(160,160,160,.55)"></div>
<div style="left:220px;top:246px;width:1px;height:13px;background:rgba(160,160,160,.55)"></div>
<div style="left:271px;top:246px;width:1px;height:13px;background:rgba(160,160,160,.55)"></div>
<div style="left:322px;top:246px;width:1px;height:13px;background:rgba(160,160,160,.55)"></div>
<div style="left:372px;top:246px;width:1px;height:13px;background:rgba(160,160,160,.55)"></div>
<div style="left:372px;top:259px;width:1px;height:12px;background:rgba(160,160,160,.55)"></div>
<div style="left:424px;top:246px;width:1px;height:25px;background:rgba(160,160,160,.55)"></div>
<div style="left:513px;top:246px;width:1px;height:25px;background:rgba(160,160,160,.55)"></div>
<div style="left:592px;top:246px;width:1px;height:25px;background:rgba(160,160,160,.55)"></div>
<div style="left:643px;top:246px;width:1px;height:25px;background:rgba(160,160,160,.55)"></div>
<div style="left:4px;top:258px;width:420px;height:1px;background:repeating-linear-gradient(90deg,#B8B8B8 0 2px,transparent 2px 4px)"></div>
<div style="left:4px;top:270px;width:778px;height:1px;background:rgba(150,150,150,.35)"></div>
<div class="t " style="left:6.0px;top:246.0px;color:#000"><i class="g">2</i><i class="g">0</i><i class="g">0</i><i class="g">0</i><i class="g">1</i></div>
<div class="t " style="left:85.0px;top:246.0px;color:#000"><i class="g">A</i></div>
<div class="t " style="left:180.5px;top:246.0px;color:#000"><b class="c">辆</b></div>
<div class="t " style="left:241.3px;top:246.0px;color:#000"><i class="g">1</i><i class="g">0</i><i class="g">.</i><i class="g">0</i><i class="g">0</i><i class="g">0</i></div>
<div class="t " style="left:374.0px;top:246.0px;color:#000"><i class="g">2</i><i class="g">0</i><i class="g">0</i><i class="g">5</i><i class="g">&#8211;</i><i class="g">0</i><i class="g">9</i><i class="g">&#8211;</i><i class="g">0</i><i class="g">4</i></div>
<div class="t " style="left:6.0px;top:258.5px;color:#000"><i class="g">E</i><i class="g">X</i><i class="g">T</i><i class="g">|</i><b class="c">下</b><b class="c">达</b><i class="g">|</i><i class="g">0</i></div>
<div class="t " style="left:85.0px;top:258.5px;color:#000"><b class="c">自</b><b class="c">行</b><b class="c">车</b><i class="g"></i><i class="g"></i><i class="g">a</i><i class="g">a</i><i class="g"></i><i class="g"></i><i class="g">a</i><i class="g"></i><i class="g"></i><i class="g">a</i></div>
<div class="t " style="left:374.0px;top:258.5px;color:#000"><i class="g">2</i><i class="g">0</i><i class="g">0</i><i class="g">5</i><i class="g">&#8211;</i><i class="g">0</i><i class="g">9</i><i class="g">&#8211;</i><i class="g">1</i><i class="g">0</i></div>
<div class="t " style="left:426.0px;top:252.0px;color:#000"><i class="g">0</i><i class="g">0</i><i class="g">0</i><i class="g">1</i><i class="g">|</i></div>
<div class="t " style="left:477.5px;top:252.0px;color:#000"><b class="c">生</b><b class="c">产</b><b class="c">科</b></div>
<div class="t " style="left:594.0px;top:252.0px;color:#000"><b class="c">排</b><b class="c">产</b><b class="c">时</b><b class="c">指</b><b class="c">定</b></div>
<div style="left:4px;top:271px;width:778px;height:26px;background:#8682EE"></div>
<div style="left:4px;top:285px;width:368px;height:12px;background:#ECE9D8"></div>
<div style="left:372px;top:285px;width:52px;height:12px;background:#FFFFFF"></div>
<div style="left:83px;top:271px;width:1px;height:14px;background:rgba(160,160,160,.55)"></div>
<div style="left:178px;top:271px;width:1px;height:14px;background:rgba(160,160,160,.55)"></div>
<div style="left:220px;top:271px;width:1px;height:14px;background:rgba(160,160,160,.55)"></div>
<div style="left:271px;top:271px;width:1px;height:14px;background:rgba(160,160,160,.55)"></div>
<div style="left:322px;top:271px;width:1px;height:14px;background:rgba(160,160,160,.55)"></div>
<div style="left:372px;top:271px;width:1px;height:14px;background:rgba(160,160,160,.55)"></div>
<div style="left:372px;top:285px;width:1px;height:12px;background:rgba(160,160,160,.55)"></div>
<div style="left:424px;top:271px;width:1px;height:26px;background:rgba(160,160,160,.55)"></div>
<div style="left:513px;top:271px;width:1px;height:26px;background:rgba(160,160,160,.55)"></div>
<div style="left:592px;top:271px;width:1px;height:26px;background:rgba(160,160,160,.55)"></div>
<div style="left:643px;top:271px;width:1px;height:26px;background:rgba(160,160,160,.55)"></div>
<div style="left:4px;top:284px;width:420px;height:1px;background:repeating-linear-gradient(90deg,#B8B8B8 0 2px,transparent 2px 4px)"></div>
<div style="left:4px;top:296px;width:778px;height:1px;background:rgba(150,150,150,.35)"></div>
<div class="t " style="left:6.0px;top:271.5px;color:#000"><i class="g">9</i><i class="g">9</i><i class="g">9</i><i class="g">9</i></div>
<div class="t " style="left:85.0px;top:271.5px;color:#000"><i class="g">A</i></div>
<div class="t " style="left:180.5px;top:271.5px;color:#000"><b class="c">辆</b></div>
<div class="t " style="left:236.6px;top:271.5px;color:#000"><i class="g">1</i><i class="g">0</i><i class="g">0</i><i class="g">.</i><i class="g">0</i><i class="g">0</i><i class="g">0</i></div>
<div class="t " style="left:374.0px;top:271.5px;color:#000"><i class="g">2</i><i class="g">0</i><i class="g">0</i><i class="g">5</i><i class="g">&#8211;</i><i class="g">0</i><i class="g">9</i><i class="g">&#8211;</i><i class="g">0</i><i class="g">5</i></div>
<div class="t " style="left:6.0px;top:284.5px;color:#000"><i class="g">R</i><i class="g">E</i><i class="g">P</i><i class="g">|</i><b class="c">确</b><b class="c">认</b><i class="g">|</i><i class="g">0</i></div>
<div class="t " style="left:85.0px;top:284.5px;color:#000"><b class="c">自</b><b class="c">行</b><b class="c">车</b><i class="g"></i><i class="g"></i><i class="g">a</i><i class="g">a</i><i class="g"></i><i class="g"></i><i class="g">a</i><i class="g"></i><i class="g"></i><i class="g">a</i></div>
<div class="t " style="left:374.0px;top:284.5px;color:#000"><i class="g">2</i><i class="g">0</i><i class="g">0</i><i class="g">5</i><i class="g">&#8211;</i><i class="g">0</i><i class="g">9</i><i class="g">&#8211;</i><i class="g">0</i><i class="g">8</i></div>
<div class="t " style="left:426.0px;top:277.5px;color:#000"><i class="g">0</i><i class="g">0</i><i class="g">0</i><i class="g">1</i><i class="g">|</i></div>
<div class="t " style="left:477.5px;top:277.5px;color:#000"><b class="c">生</b><b class="c">产</b><b class="c">科</b></div>
<div class="t " style="left:594.0px;top:277.5px;color:#000"><b class="c">排</b><b class="c">产</b><b class="c">时</b><b class="c">指</b><b class="c">定</b></div>
<div style="left:4px;top:168px;width:79px;height:14px;border:1px dotted #7A5A30;box-sizing:border-box"></div>
<div style="left:449px;top:171px;width:29px;height:118px;background:linear-gradient(180deg,#5B7FC8 0%,#9AAAD6 15%,#D8DCE4 36%,#C8EEF0 52%,#5CD0E4 74%,#5AA8E0 88%,#6A88DC 100%)"></div>
<div style="left:782px;top:154px;width:13px;height:368px;background:linear-gradient(90deg,#EEEDE5,#FBFBF8)"></div>
<div style="left:783px;top:156px;width:11px;height:12px;background:linear-gradient(135deg,#D6E2FC,#B8CCF6);border:1px solid #C2D2F4;box-sizing:border-box;border-radius:2px"></div>
<svg style="position:absolute;left:783px;top:156px" width="11" height="12" viewBox="0 0 11 12"><path d="M2.5 7L5.5 4L8.5 7" fill="none" stroke="#4D6185" stroke-width="1.6"/></svg>
<div style="left:783px;top:169px;width:11px;height:13px;background:linear-gradient(135deg,#D6E2FC,#B8CCF6);border:1px solid #C2D2F4;box-sizing:border-box;border-radius:2px"></div>
<svg style="position:absolute;left:783px;top:169px" width="11" height="13" viewBox="0 0 11 13"><path d="M3 4.5h5M3 6.5h5M3 8.5h5" stroke="#D8E4FC" stroke-width="1"/></svg>
<div style="left:783px;top:510px;width:11px;height:12px;background:linear-gradient(135deg,#D6E2FC,#B8CCF6);border:1px solid #C2D2F4;box-sizing:border-box;border-radius:2px"></div>
<svg style="position:absolute;left:783px;top:510px" width="11" height="12" viewBox="0 0 11 12"><path d="M2.5 5L5.5 8L8.5 5" fill="none" stroke="#4D6185" stroke-width="1.6"/></svg>
<div style="left:4px;top:522px;width:778px;height:13px;background:linear-gradient(180deg,#EEEDE5,#FBFBF8)"></div>
<div style="left:782px;top:522px;width:13px;height:13px;background:#ECE9D8"></div>
<div style="left:6px;top:524px;width:11px;height:11px;background:linear-gradient(135deg,#D6E2FC,#B8CCF6);border:1px solid #C2D2F4;box-sizing:border-box;border-radius:2px"></div>
<svg style="position:absolute;left:6px;top:524px" width="11" height="11" viewBox="0 0 11 11"><path d="M7 2.5L4 5.5L7 8.5" fill="none" stroke="#4D6185" stroke-width="1.6"/></svg>
<div style="left:19px;top:524px;width:12px;height:11px;background:linear-gradient(135deg,#D6E2FC,#B8CCF6);border:1px solid #C2D2F4;box-sizing:border-box;border-radius:2px"></div>
<svg style="position:absolute;left:19px;top:524px" width="12" height="11" viewBox="0 0 12 11"><path d="M4.5 3v5M6.5 3v5M8.5 3v5" stroke="#D8E4FC" stroke-width="1"/></svg>
<div style="left:769px;top:524px;width:12px;height:11px;background:linear-gradient(135deg,#D6E2FC,#B8CCF6);border:1px solid #C2D2F4;box-sizing:border-box;border-radius:2px"></div>
<svg style="position:absolute;left:769px;top:524px" width="12" height="11" viewBox="0 0 12 11"><path d="M5 2.5L8 5.5L5 8.5" fill="none" stroke="#4D6185" stroke-width="1.6"/></svg>
<svg style="position:absolute;left:668px;top:488px" width="30" height="28" viewBox="0 0 30 28"><path d="M8.4 3L18 3Q12 7 11.5 13Q11 18 7.5 23.5L2 14Z" fill="#8591B1"/><path d="M12.5 19.5Q13 7 21.5 4.5Q25 7 27 12.5Q18 13.5 12.5 19.5Z" fill="#E3A389"/><path d="M12 25.5Q17 16 27 15L21.5 25.5Z" fill="#8591B1"/></svg>
<svg style="position:absolute;left:694px;top:488px" width="30" height="28" viewBox="0 0 30 28"><g fill="none" stroke="#7C88A8" stroke-width="2" stroke-linecap="round"><path d="M5.5 4.5L7 6.5M3.7 11L6 12.5M4 24L8 15.5M10.5 6L23 5M14 7.3L17 10M10.5 11H22.5Q15 17 9 23.5M12.5 20.5Q18 22.5 24.5 23"/></g></svg>
<svg style="position:absolute;left:719px;top:488px" width="30" height="28" viewBox="0 0 30 28"><g fill="none" stroke="#7C88A8" stroke-width="2" stroke-linecap="round"><path d="M7.5 3.5L8.5 5.5M16 3.5L15.5 5.5M4 7H21.5M10 7V12.5M16 7V12.5M6.5 9L7.5 11M19 9L18 11M2 13H23M6.5 15.5H18.5V25H6.5ZM6.5 20H18.5"/></g></svg>
<svg style="position:absolute;left:742px;top:488px" width="30" height="28" viewBox="0 0 30 28"><g fill="none" stroke="#7C88A8" stroke-width="2" stroke-linecap="round"><path d="M2 7H11M6 4L3 13.5H10M7 9V25M1.5 19L11 18M15.5 4L13 11M14 9H22L20.5 12M17.5 11Q16 19 12.5 24M17 14Q20 20 23 24"/></g></svg>
<svg style="position:absolute;left:765px;top:488px" width="30" height="28" viewBox="0 0 30 28"><g fill="none" stroke="#7C88A8" stroke-width="2" stroke-linecap="round"><path d="M8.5 4L2.5 14.5M6.5 10V25M12.5 6L10 12.5M11 9.5H22.5M9.5 16H23.5M16.5 4V25"/></g></svg>
<div style="left:671px;top:513px;width:130px;height:12px;font-family:'Liberation Serif',serif;font-size:14px;line-height:12px;color:#E3A389;letter-spacing:0.35px;white-space:nowrap;-webkit-text-stroke:0.3px #E3A389">www.fanpusoft.com</div>
</body></html>
